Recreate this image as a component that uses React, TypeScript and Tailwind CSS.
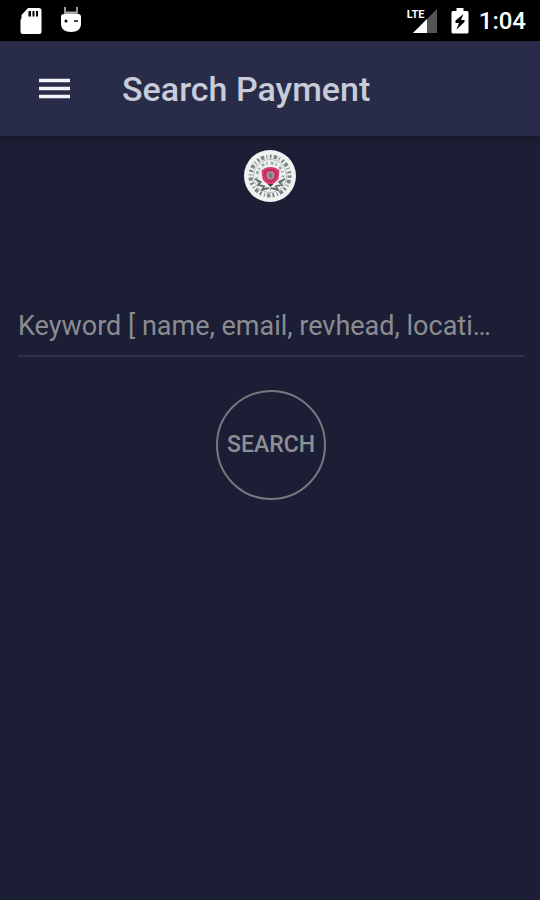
import { useState } from 'react'

function SdCardIcon() {
  return (
    <svg width="22" height="28" viewBox="0 0 22 28" className="shrink-0">
      <path d="M8 1h11a2.500 2.500 0 0 1 2.500 2.500v21a2.500 2.500 0 0 1-2.500 2.500H3a2.500 2.500 0 0 1-2.500-2.500V13l1-2V8z" fill="#fff" />
      <path d="M8.500 4h2.500v5.500H8.500zM12.500 4h2v5.500h-2zM16 4h2v5.500h-2z" fill="#000" />
    </svg>
  )
}

function DebugIcon() {
  return (
    <svg width="22" height="28" viewBox="0 0 22 28" className="shrink-0">
      <path d="M5 0v7M17 0v7" stroke="#999" strokeWidth="2" />
      <path d="M6 4.500h10v3H6z" fill="#aaa" />
      <path d="M1 10q0-3 3-3h14q3 0 3 3v7c0 5-4 8-10 8S1 22 1 17z" fill="#fff" />
      <circle cx="6" cy="14" r="1.500" fill="#000" />
      <path d="M14 14h4" stroke="#444" strokeWidth="2" />
    </svg>
  )
}

function SignalIcon() {
  return (
    <span className="relative block h-6 w-[30px]">
      <svg width="30" height="24" viewBox="0 0 30 24">
        <path d="M30 0v24H6z" fill="#555" />
        <path d="M20 10v14H6z" fill="#fff" />
      </svg>
      <span className="absolute top-0 left-0 text-[11px] leading-[12px] font-bold">LTE</span>
    </span>
  )
}

function BatteryIcon() {
  return (
    <svg width="18" height="26" viewBox="0 0 18 26" className="shrink-0">
      <path d="M5.500 0h7v3H16a1.500 1.500 0 0 1 1.500 1.500V24a1.500 1.500 0 0 1-1.500 1.500H2A1.500 1.500 0 0 1 .5 24V4.500A1.500 1.500 0 0 1 2 3h3.500z" fill="#fff" />
      <path d="M12.500 6 4.500 12.500V15H8L5.500 21.500 13.500 14v-2H10z" fill="#000" />
    </svg>
  )
}

function StatusBar() {
  return (
    <div className="flex h-[41px] items-center justify-between bg-black pr-3.5 pl-5 text-white">
      <div className="flex items-center gap-[18px]">
        <SdCardIcon />
        <DebugIcon />
      </div>
      <div className="flex items-center">
        <SignalIcon />
        <span className="mr-2.5 ml-3.5">
          <BatteryIcon />
        </span>
        <span className="text-2xl leading-6 font-medium">1:04</span>
      </div>
    </div>
  )
}

function AppBar() {
  return (
    <header className="flex h-[95px] items-center gap-[51px] bg-[#292c49] pl-[38px] shadow-[0_2px_5px_rgba(0,0,0,0.25)]">
      <button type="button" aria-label="Open menu">
        <svg width="33" height="24" viewBox="0 0 33 24" className="block">
          <path d="M1 3.500h31M1 11.500h31M1 19.500h31" stroke="#f1f3fa" strokeWidth="3.500" />
        </svg>
      </button>
      <h1 className="text-[34px] leading-10 font-medium text-[#c8cbd8]">Search Payment</h1>
    </header>
  )
}

function Seal() {
  return (
    <svg width="54" height="54" viewBox="0 0 54 54" role="img" aria-label="Seal">
      <circle cx="27" cy="27" r="26" fill="#eef3f2" />
      <circle cx="27" cy="27" r="19.500" fill="none" stroke="#7d8988" strokeWidth="4" strokeDasharray="2 2 3.500 2 1 2.500" />
      <circle cx="27" cy="27" r="16.500" fill="none" stroke="#b3bcba" strokeWidth="1" />
      <circle cx="27" cy="27" r="13" fill="none" stroke="#a3aeac" strokeWidth="3" strokeDasharray="1.500 3 3 2" />
      <path d="M12 30l6 3-3 3 6 1-2 4 7-2M42 30l-6 3 3 3-6 1 2 4-7-2" fill="none" stroke="#59635f" strokeWidth="1.500" />
      <path d="M18.500 22q3-4 9-4t9 4l-1 8q-3 4-8 6-6-2-8-6z" fill="#d93a69" />
      <path d="M21.500 23l3-2h6l3 3-1 5-4 3h-3l-3-4z" fill="none" stroke="#a32652" strokeWidth="1" />
      <circle cx="27.500" cy="26.500" r="4" fill="#9b929c" />
      <path d="M27.500 24.500v4" stroke="#6c6370" strokeWidth="2" />
      <path d="M24.500 35l3 3 3-3" fill="#45353f" />
    </svg>
  )
}

export default function App() {
  const [keyword, setKeyword] = useState('')

  return (
    <div className="min-h-screen bg-[#1b1e34] font-['Roboto',sans-serif]">
      <StatusBar />
      <AppBar />
      <main className="flex flex-col items-center px-4 pt-[13px]">
        <Seal />
        <form className="mt-[94px] flex w-full flex-col items-center pl-0.5" onSubmit={(e) => e.preventDefault()}>
          <input
            type="text"
            aria-label="Keyword"
            value={keyword}
            onChange={(e) => setKeyword(e.target.value)}
            placeholder="Keyword [ name, email, revhead, locati…"
            className="h-[60px] w-full border-b-2 border-[#303348] bg-transparent text-[27px] text-[#c8cbd8] outline-none placeholder:text-[#8b8c92]"
          />
          <button
            type="submit"
            className="mt-[33px] size-[110px] rounded-full border-2 border-[#77787f] text-[23px] font-medium text-[#8e8f95]"
          >
            SEARCH
          </button>
        </form>
      </main>
    </div>
  )
}
